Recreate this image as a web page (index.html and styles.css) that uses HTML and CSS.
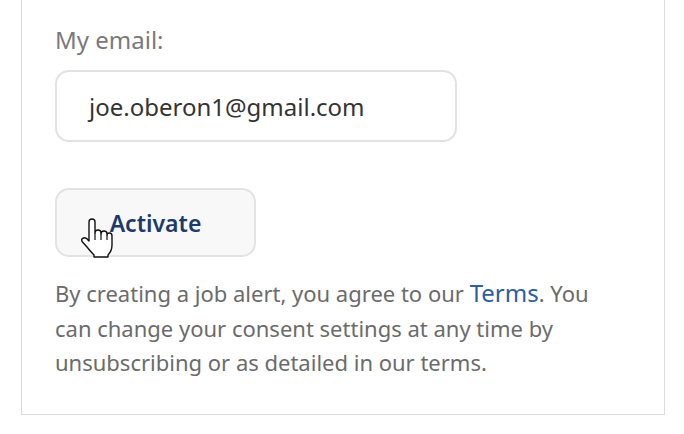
FILE: index.html
```html
<!DOCTYPE html>
<html>
<head>
<meta charset="utf-8">
<link rel="stylesheet" href="styles.css">
</head>
<body>
<div class="card">
  <label class="label">My email:</label>
  <div class="input">joe.oberon1@gmail.com</div>
  <div class="btn-wrap">
    <button class="btn">Activate</button>
    <svg class="cursor" width="33" height="42" viewBox="0 0 33 42">
      <path d="M9,24 L9,5 Q9,2 12,2 Q15,2 15,5 L15,16 Q15,13 18,13 Q21,13 21,16 L21,17 Q21,14 24,14 Q27,14 27,17 L27,18 Q27,16 29.5,16 Q32,16 32,19 L32,28 Q32,34 28,38 L28,40 L14,40 L14,38 Q11,35 7,30 L2.5,25 Q0.5,22 3.5,21 Q6,20 9,24 Z" fill="#fff" stroke="#111" stroke-width="1.4" stroke-linejoin="round"/>
      <path d="M15,16 L15,23 M21,17 L21,23 M27,18 L27,23" stroke="#111" stroke-width="1.2" fill="none"/>
    </svg>
  </div>
  <p class="note">By creating a job alert, you agree to our <a class="link" href="#">Terms</a>. You can change your consent settings at any time by unsubscribing or as detailed in our terms.</p>
</div>
</body>
</html>
```
FILE: styles.css
```css
html, body {
  margin: 0;
  padding: 0;
  background: #fff;
}
body {
  font-family: "Noto Sans", "Open Sans", sans-serif;
}
.card {
  margin-left: 21px;
  box-sizing: border-box;
  width: 644px;
  height: 415px;
  border: 1px solid #dcdcdc;
  border-top: none;
  padding: 24px 0 0 33px;
  display: flex;
  flex-direction: column;
  align-items: flex-start;
}
.label {
  font-size: 24px;
  line-height: 32px;
  color: #7a7a7a;
}
.input {
  margin-top: 14px;
  width: 402px;
  height: 72px;
  box-sizing: border-box;
  border: 2px solid #e2e2e2;
  border-radius: 14px;
  padding-left: 32px;
  display: flex;
  align-items: center;
  font-size: 24px;
  color: #333;
}
.btn-wrap {
  position: relative;
  margin-top: 46px;
}
.btn {
  width: 201px;
  height: 69px;
  box-sizing: border-box;
  background: #f8f8f8;
  border: 2px solid #e3e3e3;
  border-radius: 14px;
  font-family: "Noto Sans", sans-serif;
  font-size: 23px;
  font-weight: 600;
  color: #1c3b6c;
  padding: 0;
  display: block;
}
.cursor {
  position: absolute;
  left: 25px;
  top: 29px;
}
.note {
  margin: 19px 0 0;
  width: 560px;
  font-size: 22px;
  line-height: 34.5px;
  color: #6b6b6b;
}
.link {
  color: #2b5ea6;
  text-decoration: none;
  font-size: 24px;
  line-height: 1;
}
```
